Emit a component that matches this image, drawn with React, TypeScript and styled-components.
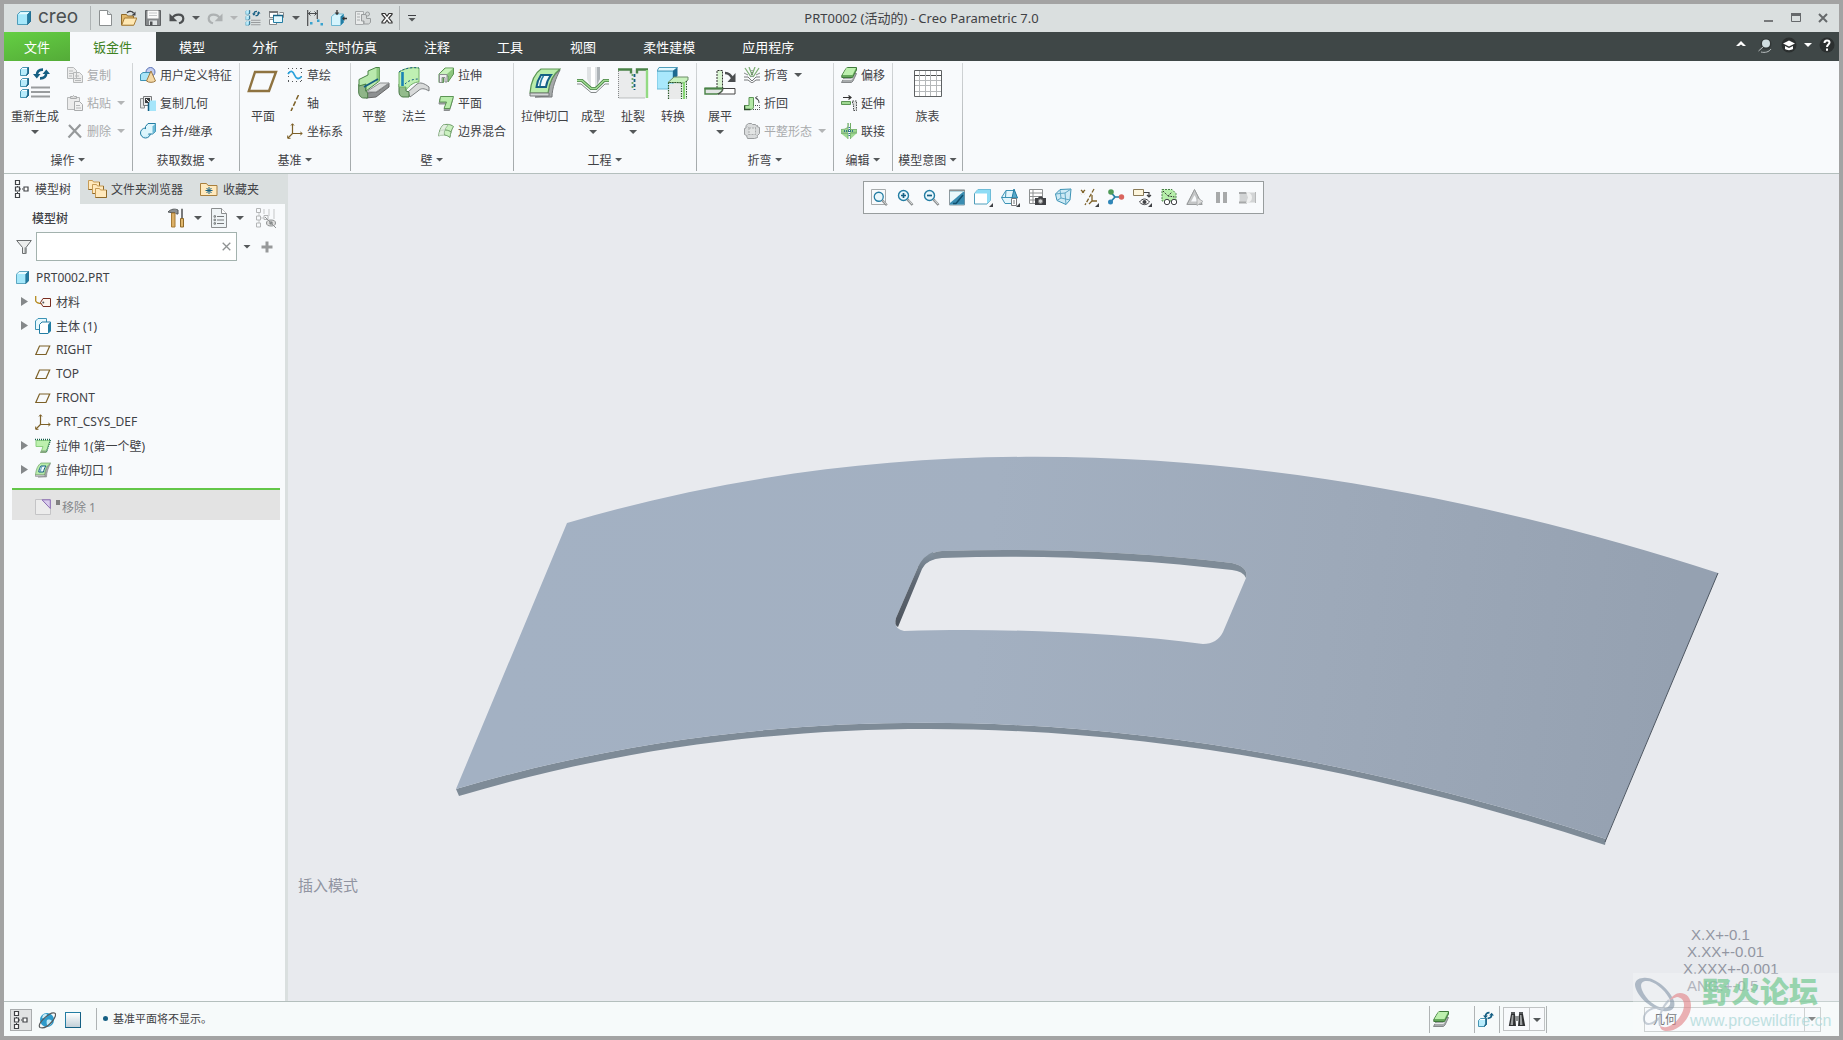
import React from 'react';
import styled, { createGlobalStyle, css } from 'styled-components';

const ink = '#3f4145';
const muted = '#a9abad';
const line = '#b4bfbd';
const panel = '#f8fafc';
const chrome = '#dadfdf';

const Global = createGlobalStyle`
  *, *::before, *::after { box-sizing: border-box; }
  body { margin: 0; }
  body, button, input, select {
    font-family: 'Noto Sans', 'Noto Sans CJK SC', sans-serif;
    font-size: 12px;
    color: ${ink};
  }
  button { border: 0; padding: 0; background: none; cursor: default; white-space: nowrap; }
  svg { display: block; flex: none; }
`;

const Frame = styled.div`
  position: relative;
  display: flex;
  flex-direction: column;
  min-height: 100vh;
  border: 4px solid #a3a3a3;
  background: ${panel};
`;

/* ---------- icons ---------- */

type IconProps = { size?: number; box?: number; children: React.ReactNode };
const Svg = ({ size = 16, box, children }: IconProps) => (
  <svg width={size} height={size} viewBox={`0 0 ${box ?? size} ${box ?? size}`} fill="none" aria-hidden="true">
    {children}
  </svg>
);

const MiniCube = ({ x, y, s = 9 }: { x: number; y: number; s?: number }) => (
  <g transform={`translate(${x} ${y}) scale(${s / 9})`}>
    <path d="M.5 2.500 2.500.5h6v6l-2 2h-6z" fill="#b8ecfc" stroke="#4795b3" />
    <path d="M1.500 2 2.700 1H8L7 2z" fill="#fff" />
    <path d="M8.500.5v6l-2 2v-1l1-1.500v-5z" fill="#155f83" stroke="#155f83" strokeWidth=".6" />
  </g>
);

const Cube = ({ size = 14 }: { size?: number }) => (
  <Svg size={size} box={14}>
    <path d="M.5 3.500 3.500.5h10v10l-3 3H.5z" fill="#a6e8fb" stroke="#4f9dba" />
    <path d="M3.700 1.200H12.600L10.300 3.300H1.500z" fill="#e8fbff" />
    <path d="M13.500.5v10l-3 3v-10z" fill="#237da3" stroke="#155f83" strokeWidth=".6" />
  </Svg>
);

const CycleArrows = ({ x, y, s = 1 }: { x: number; y: number; s?: number }) => (
  <g transform={`translate(${x} ${y}) scale(${s})`} stroke="#155f83" strokeWidth="2.600">
    <path d="M3.800 8.500C3.800 4.500 6 2.500 10 2.600" />
    <path d="M13.300 5.500C13.300 9.500 11 11.500 7 11.400" />
    <path d="M0 7h7.500L3.800 11.500z M9.500 7H17L13.300 2.500z" fill="#155f83" stroke="none" />
  </g>
);

const Regen = ({ size = 32 }: { size?: number }) => (
  <Svg size={size} box={32}>
    <MiniCube x={1} y={0} />
    <MiniCube x={1} y={11} />
    <MiniCube x={1} y={22} />
    <CycleArrows x={14} y={0} />
    <path d="M12 20.500h19M12 25h19M12 29.500h19" stroke="#999c9e" strokeWidth="2" />
  </Svg>
);

const NewFile = () => (
  <Svg>
    <path d="M2.500.5h8l4 4v11h-12z" fill="#fff" stroke="#8b8f90" />
    <path d="M10.500.5v4h4" fill="#dfe4e5" stroke="#8b8f90" />
  </Svg>
);
const OpenFolder = () => (
  <Svg>
    <path d="M.5 4.500h5l1 1.500h6v9H.5z" fill="#e2b96d" stroke="#8f6a2a" />
    <path d="M3.500 8h12.300l-3 7.200H.7z" fill="#ffe8b3" stroke="#a67b35" />
    <path d="M6 2.800C8 .8 11 .8 12.500 3" stroke="#3f4145" strokeWidth="1.400" />
    <path d="M14.500 1.500v4h-4z" fill="#3f4145" />
  </Svg>
);
const Save = () => (
  <Svg>
    <path d="M.5.5h15v15h-15z" fill="#85888a" stroke="#5e6163" />
    <path d="M2.500.5h11v8h-11z" fill="#fafafa" />
    <path d="M4 3h8M4 5.500h8" stroke="#c4c6c8" />
    <path d="M4 10.500h8V15H4z" fill="#dfe3e4" />
    <path d="M5 11.500h2.500V15H5z" fill="#4e5052" />
  </Svg>
);
const Undo = ({ flip = false, color = '#4c4f51' }: { flip?: boolean; color?: string }) => (
  <Svg>
    <g transform={flip ? 'translate(16 0) scale(-1 1)' : undefined}>
      <path d="M3 8.500C6 3.200 14 3.500 14.300 8.500c0 2.500-1.500 4-4.300 4.800" stroke={color} strokeWidth="2.200" />
      <path d="M.5 3.500v7.800h7.800z" fill={color} />
    </g>
  </Svg>
);
const Windows = () => (
  <Svg>
    <path d="M.5 1.500h8v6h-8zM.5 9.500h7v5h-7z" fill="#fff" stroke="#85898b" />
    <path d="M0 2h9" stroke="#77797b" strokeWidth="2" />
    <path d="M10.500 2.500h4v5h-2" fill="#fff" stroke="#85898b" />
    <path d="M4.500 5.500h9v7h-9z" fill="#e2f7fd" stroke="#237da3" />
    <path d="M4 5.500h10" stroke="#155f83" strokeWidth="1.500" />
  </Svg>
);
const Measure = () => (
  <Svg>
    <path d="M.7 0v16M10.300 0v9" stroke="#4a4d4f" strokeWidth="1.200" />
    <path d="M1 3.500h9M3.500 1.500 1.500 3.500l2 2M7.500 1.500l2 2-2 2" stroke="#4a4d4f" />
    <path d="M3 12h2.500v2.500H3zM10 9.500h2.500V12H10zM13.500 13H16v2.500h-2.500z" fill="#3aa3cf" />
  </Svg>
);
const CubeArrows = () => (
  <Svg>
    <path d="M.5 6.500 3.500 4h9v8.500l-3 3h-9z" fill="#d5f4fd" stroke="#6db7d2" />
    <path d="M12.500 4v8.500l-3 3V6.500z" fill="#237da3" />
    <path d="M6 0v4M16 8.500h-4" stroke="#333" strokeWidth="1.300" />
    <path d="M3.700 2.500h4.600L6 5.200zM13.500 6.200v4.600L11 8.500z" fill="#333" />
  </Svg>
);
const GreyPart = () => (
  <Svg>
    <path d="M.5 1.500h8v13h-8z" fill="#e9ebeb" stroke="#a7abac" />
    <path d="M2 4h3M2 7h3M2 10h3" stroke="#a7abac" />
    <path d="M6.500 4.500h5v4h4v4l-2 1.500H9v-3H6.500z" fill="#d5d8d8" stroke="#989c9d" />
    <circle cx="12.500" cy="4" r="2" fill="#d5d8d8" stroke="#989c9d" />
  </Svg>
);
const CloseWin = () => (
  <Svg>
    <path d="M3 3.500h3l2 2.800 2-2.800h3v1L9.800 8l3.200 4v1h-3L8 10.200 6 13H3v-1L6.200 8 3 4.500z" fill="#fff" stroke="#333" strokeWidth="1.200" />
  </Svg>
);

const Copy = () => (
  <Svg>
    <path d="M.5.5h6l3 3v8h-9zM6.500 5.500h6l3 3v7h-9z" fill="#ececec" stroke="#b6b8b9" />
    <path d="M2 4h4M2 6.500h4M2 9h3M8 9h4M8 11.500h6M8 13.500h6" stroke="#b6b8b9" />
  </Svg>
);
const Paste = () => (
  <Svg>
    <path d="M.5 2.500h12v12H.5z" fill="#ececec" stroke="#b6b8b9" />
    <path d="M3.500 3.500v-2h2L6.500.5l1 1h2v2z" fill="#ddd" stroke="#a9abac" />
    <path d="M7.500 6.500h5l3 3v6h-8z" fill="#f2f2f2" stroke="#a9abac" />
    <path d="M9 10.500h4M9 13h5" stroke="#b6b8b9" />
  </Svg>
);
const Delete = () => (
  <Svg><path d="m2 2 12 12.500M13.500 1.500 1.500 14.500" stroke="#96999b" strokeWidth="2.200" /></Svg>
);
const UserFeature = () => (
  <Svg>
    <circle cx="10.500" cy="5" r="4.500" fill="#c3cdf0" stroke="#5871b5" />
    <path d="M.5 7.500 3 5.500h7v6l-2 2H.5z" fill="#a9e4f8" stroke="#3d93b5" />
    <path d="m11 4 4.500 10c-2 1.800-7 1.800-9 0z" fill="#f5d9a6" stroke="#9d7a43" />
  </Svg>
);
const CopyGeom = () => (
  <Svg>
    <path d="M.5 3.500h4V13h-4z" fill="#e5e6e7" stroke="#8d9091" />
    <path d="M3.500 1.500h8v9h-8z" fill="#e9eaeb" stroke="#77797b" />
    <path d="M5 3h5v5H5z" fill="#3a3d40" />
    <path d="m6 4 3 3" stroke="#fff" />
    <path d="M10 5.500h6V16h-7V8z" fill="#a5e5fa" />
    <path d="M8.500 8v8" stroke="#155f83" strokeWidth="1.500" />
  </Svg>
);
const Merge = () => (
  <Svg>
    <circle cx="5.500" cy="10" r="5" fill="#c9eefa" stroke="#237da3" />
    <path d="M5.500 3.500 8 .5h7.500v8l-3 2.500h-7z" fill="#dff6fd" stroke="#237da3" />
    <path d="M15.500.5v8l-3 2.500V3.500z" fill="#6bb9d6" />
    <circle cx="5" cy="9.500" r="3.500" fill="#dcf5fc" />
  </Svg>
);
const PlaneBig = () => (
  <Svg size={32}><path d="M8 5h21l-7 19H1.800z" stroke="#8f7340" strokeWidth="2.400" /></Svg>
);
const Sketch = () => (
  <Svg>
    <path d="M1 1.500h14M1 14.500h14M1.500 1v14M14.500 1v14" stroke="#55585a" strokeDasharray="1 3" />
    <path d="M1 7C4 2.500 6 4.500 7.500 8s4 5 7 1.500" stroke="#2aa2dc" strokeWidth="1.800" />
  </Svg>
);
const Axis = () => (
  <Svg><path d="M11.500 0 4 16" stroke="#7d6128" strokeWidth="1.500" strokeDasharray="5 2" /></Svg>
);
const Csys = ({ color = '#7d6128' }: { color?: string }) => (
  <Svg>
    <path d="M5.500 1v9.500H15M5.500 10.500 1 15" stroke={color} strokeWidth="1.200" />
    <path d="M4 2.500 5.500.7 7 2.500M13.300 9l2 1.500-2 1.500M.7 12.500v2.800h2.800" stroke={color} />
  </Svg>
);

const FlatWall = () => (
  <Svg size={32}>
    <path d="M8 26v5l10-1 13-10v-4l-12 9z" fill="#8d9091" stroke="#666" />
    <path d="m8 25 14-9h9l-13 9z" fill="#dadcdc" stroke="#8d9091" />
    <path d="M.7 19v6c0 3 2 6 5 6h4V26l-2-2V17H1z" fill="#8fb588" stroke="#4a7a47" />
    <path d="M1 12.500 10 8V4l8-3.500h3.500V14L8 24V17l-7 2z" fill="#b9e9ad" stroke="#4a8347" />
    <path d="M18.500 1h3v13l-3 2z" fill="#8cc67e" />
    <path d="M6 20 20 12" stroke="#155f83" strokeWidth="1.800" />
  </Svg>
);
const Flange = () => (
  <Svg size={32}>
    <path d="m10 25 9-8c3-2 7-1 12 3v4c-5-3-8-3-11 0l-8 6z" fill="#d8dada" stroke="#7a7d7f" />
    <path d="M1 20v5c0 3 2 5 4 5h6v-5l-3-1v-7H1z" fill="#93bb8c" stroke="#4a7a47" />
    <path d="M1 5C7 1 14 0 21 1v14c-5 0-9 3-13 8v-3H1z" fill="#bff0b3" stroke="#6fae65" />
    <path d="M1 5C7 1 14 0 21 1M7 17c4-4 9-5 14-5" stroke="#155f83" strokeDasharray="2 2" />
    <path d="M4.500 5v14" stroke="#1c84b5" strokeWidth="2.600" />
  </Svg>
);
const Extrude = () => (
  <Svg>
    <path d="m1 7 6-6h8.500v6L10 15V9H5.500v6.500H1z" fill="#8cc67e" stroke="#5c9555" />
    <path d="m1.500 7 6-5.500h7.500L9 7z" fill="#c9f3bd" />
    <path d="M1.500 7.500H9V15H7v-4.500H4v5H1.500z" fill="#eef0f0" stroke="#8d9091" />
  </Svg>
);
const FlatPlane = () => (
  <Svg>
    <path d="M2 3.500h13l-3.500 12H6L8 9H1z" fill="#9da1a2" stroke="#8a8d8e" />
    <path d="M2.500 1.500h13L12 13.500H6L8.500 7h-7z" fill="#b9ecab" stroke="#5c9555" />
  </Svg>
);
const Boundary = () => (
  <Svg>
    <path d="M5 2c4-1 7-1 10.500 1.500-2 3-3 7-3.500 11C9 12 5 11 .7 13 1 8 2.500 5 5 2z" fill="#c9f0be" stroke="#6a9a64" />
    <path d="M10 2C7 5 6 8 6 12M2 8c4-2 8-1 11.500 1" stroke="#6a9a64" />
    <path d="M.7 13c1-5 2-8 4.300-11l5 0C7.500 5 6 8 6 12z" fill="#eceeee" opacity=".7" />
  </Svg>
);
const Cutout = ({ size = 32 }: { size?: number }) => (
  <Svg size={size} box={32}>
    <path d="M19 29c1-12 4-20 12-26-4 8-8 18-8 27H6z" fill="#a5a9a9" stroke="#77797b" />
    <path d="M1 26C2 14 6 6 12 2h19C23 8 20 17 19 26z" fill="#b9ecab" stroke="#5c9555" strokeWidth="1.200" />
    <path d="M1 26v3h19v-3z" fill="#d4d7d7" stroke="#77797b" />
    <path d="M7.500 20c.7-6 2.500-9 4.500-12h10c-3 4-4.500 8-5 12z" fill="#f3fafc" stroke="#155f83" strokeWidth="2" />
    <path d="M11 19c.5-4 1-7 3.500-10" stroke="#237da3" strokeWidth="1.600" />
  </Svg>
);
const Form = () => (
  <Svg size={32}>
    <path d="M10 0h13v12l-4 8h-5l-4-8z" fill="#dfe2e4" />
    <path d="M14 0h4v20h-4z" fill="#fff" />
    <path d="M20 0h3v12l-3 6z" fill="#adb3b7" />
    <path d="M0 13.500h5l9 8h5l8-8h5" stroke="#4a8347" strokeWidth="3.200" />
    <path d="M0 13.500h5l9 8h5l8-8h5" stroke="#a3dd95" strokeWidth="1.400" />
    <path d="M0 17h4l10 8.500h5L28 17h4" stroke="#85898a" />
  </Svg>
);
const Rip = () => (
  <Svg size={32}>
    <path d="M1 3h30v28H1z" fill="#eaebec" />
    <path d="M1.500 4v27h27" stroke="#85888a" strokeDasharray="1 1" />
    <path d="M1 2.500h13v4M31 2.500H20v4" stroke="#4a8347" strokeWidth="2.400" />
    <path d="M30 3v28" stroke="#93da83" strokeWidth="2.400" />
    <path d="M15.500 7v15" stroke="#6fa567" strokeWidth="1.800" strokeDasharray="2 2" />
    <path d="M17.500 7v16" stroke="#155f83" strokeWidth="1.800" strokeDasharray="3 2" />
  </Svg>
);
const Convert = () => (
  <Svg size={32}>
    <path d="M0 4h16v18H0z" fill="#a9e8fc" stroke="#6cbcd9" />
    <path d="M0 4 2 .5h18.500L16 4z" fill="#e1f8ff" stroke="#4f9dba" />
    <path d="m16 4 4.500-3.500V9L16 13z" fill="#1d6a90" />
    <path d="M11 15.500 17 10h14v3l-4 3z" fill="#c8f1bd" stroke="#6f8f6a" />
    <path d="M12 17h12v15H12z" fill="#e9eaea" />
    <path d="M11.500 32V15.500h13V32" stroke="#2f5a2d" strokeDasharray="1.500 1" strokeWidth="1.200" />
    <path d="M27 15v17" stroke="#86d674" strokeWidth="2.400" />
    <path d="M29.500 14v18" stroke="#2f5a2d" strokeDasharray="1.500 1" />
  </Svg>
);
const Unbend = () => (
  <Svg size={32}>
    <path d="M13 21V3.500h5.500V21" fill="#d9f5d2" stroke="#333" strokeDasharray="2 1" />
    <path d="M1 21.500h18c-1 4-3 5-6 5.500H1z" fill="#e3e5e5" stroke="#4a8347" strokeWidth="1.400" />
    <path d="M19 21.500h12V27H14c3-1 5-2.500 5-5.500z" fill="#fff" stroke="#444" />
    <path d="M.5 21.500H18" stroke="#4a8347" strokeWidth="2" />
    <path d="M21 6c4 0 6 2 7.500 6" stroke="#4a4d4f" strokeWidth="2.400" />
    <path d="M31.500 6v9h-8z" fill="#4a4d4f" />
  </Svg>
);
const Bend = () => (
  <Svg>
    <path d="M0 10h4l4 4 4-4h4M0 13h4l4 3 4-3h4" stroke="#77797b" />
    <path d="M1 1l6 9M15 1 9 10M5 0l3 8 3-8" stroke="#7fae77" strokeWidth="1.300" />
    <path d="M8 3v8" stroke="#55595b" strokeDasharray="1 1" />
    <path d="M0 6l4 2M16 6l-4 2" stroke="#85898a" />
  </Svg>
);
const BendBack = () => (
  <Svg>
    <path d="M.5 10.500H5v-8h4.500v9c0 2-1 3-3 3h-6z" fill="#b3e7a6" stroke="#5c9555" />
    <path d="M6.500 14.500H.5v-4" stroke="#2f4f2d" strokeWidth="1.500" />
    <path d="M11 10.500h4.500v4H8" stroke="#4a4d4f" strokeDasharray="1 1" />
    <path d="M15 8c0-3-1-4.500-3.500-5M13.500 1l-2 2 2.500 2" stroke="#4a4d4f" />
  </Svg>
);
const FlatPattern = () => (
  <Svg>
    <path d="M2 2.500 4.500.5h3l1 1h3l1.500 2 2.500 1v6l-2 2v2l-3 1h-7l-1-3-2-1v-6L2 5z" fill="#d9dbdc" stroke="#9a9d9f" />
    <path d="m2 2 12 12M14 2 2 14" stroke="#b1b4b5" strokeDasharray="2 1" />
    <path d="M5 5h6.500v6.500H5z" fill="#e2e4e4" stroke="#a9abac" strokeDasharray="2 1" />
  </Svg>
);
const Offset = () => (
  <Svg>
    <path d="M5.500 6.500h10l-3.500 7.500-1.500 1.500H.5z" fill="#a7abac" stroke="#85888a" />
    <path d="M1 12.500h9.500L14 5.500" fill="none" stroke="#e8eaea" />
    <path d="M5 1.500 6.500.5h9V3l-4 7.500H.8V8.500z" fill="#67a95d" stroke="#3f7a3b" />
    <path d="M5.500 1h9.500l-3.500 7H1.500z" fill="#bdf0ae" />
  </Svg>
);
const Extend = () => (
  <Svg>
    <path d="M2 2.500h7M7.500.5l2.500 2-2.500 2" stroke="#333" strokeWidth="1.200" />
    <path d="M.5 6.500h9v3h-9z" fill="#9fd992" stroke="#5c9555" />
    <path d="M11.500 6h4v9.500h-3V9h-1z" fill="#dcdede" stroke="#4a4d4f" strokeDasharray="1.500 1" />
  </Svg>
);
const Join = () => (
  <Svg>
    <path d="M7 0c1 4-1 6.500-7 6.500v2.800h7zM9.500 0v6.500H16v2.800H9.500zM9.500 16V10H16M7 16v-5.500H0" fill="#9fd992" stroke="#6cab62" strokeWidth=".8" />
    <path d="M8.200 4v9M3 8h10" stroke="#155f83" strokeDasharray="1 1" strokeWidth="1.300" />
  </Svg>
);
const FamilyTable = () => (
  <Svg size={32}>
    <path d="M2.500 3.500h27v26h-27z" fill="#fff" stroke="#5e6163" />
    <path d="M2.500 8.500h27" stroke="#4e5052" />
    <path d="M7.500 4v25M13.500 4v25M18.500 4v25M24.500 4v25M3 13.500h26M3 18.500h26M3 24.500h26" stroke="#b5b8ba" />
  </Svg>
);

const TreeIcon = ({ color = '#3f4145' }: { color?: string }) => (
  <Svg size={20}>
    <path d="M5.500 5v10M8 10h4" stroke={color} strokeDasharray="1 1" />
    <path d="M3.500 1.500h4v4h-4zM3.500 8h4v4h-4zM3.500 14.500h4v4h-4zM12 8h4v4h-4z" fill="#fff" stroke={color} strokeWidth="1.200" />
  </Svg>
);
const Folders = () => (
  <Svg size={20}>
    {[[0, 0], [4, 4], [7, 8]].map(([x, y]) => (
      <g key={x} transform={`translate(${x} ${y})`}>
        <path d="M.5 1.500h4l1 1.500h6v7.500H.5z" fill="#ffe9bd" stroke="#c79b55" />
        <path d="M.5 10.500h11V3" stroke="#8f6a2a" />
      </g>
    ))}
  </Svg>
);
const Favorite = () => (
  <Svg size={20}>
    <path d="M.5 4.500h6l1.500 2h9v10H.5z" fill="#ffe9bd" stroke="#a97f3c" />
    <path d="M9 8v7M5.500 11.500h7M6.500 9l5 5M11.500 9l-5 5" stroke="#155f83" />
  </Svg>
);
const Hammer = () => (
  <Svg size={20}>
    <path d="M1 4C4 .8 8 .5 11 2v4H9.500L8 4.500H4z" fill="#8d9091" stroke="#55595b" />
    <path d="M4.500 5h3.500v14H4.500z" fill="#dcb067" stroke="#a67b35" />
    <path d="M14.500 1h1v9h-1z" fill="#999" stroke="#77797b" />
    <path d="M13.500 10.500h3v8.500h-3z" fill="#e0b76e" stroke="#8f6a2a" />
  </Svg>
);
const ListDoc = () => (
  <Svg size={20}>
    <path d="M2.500.5h10l5 5v14h-15z" fill="#eff4f6" stroke="#8a8d8e" />
    <path d="M12.500.5v5h5" fill="#fff" stroke="#8a8d8e" />
    <path d="M8 8.500h7M8 12h7M8 15.500h7" stroke="#77797b" />
    <path d="M5 7.700h1.500v1.500H5zM5 11.200h1.500v1.500H5zM5 14.700h1.500v1.500H5z" stroke="#66696b" strokeWidth=".8" />
  </Svg>
);
const HideTree = () => (
  <Svg size={20}>
    <path d="M3 4v13M5 10h4M8 1v5M13 1v7M18 1v10" stroke="#c5c7c8" />
    <path d="M.5.5h4v4h-4zM.5 8h4v4h-4zM.5 15h4v4h-4zM8 7.500h4v4H8z" fill="#f8fafc" stroke="#b3b5b6" />
    <ellipse cx="15" cy="15" rx="4.500" ry="3" fill="#ddd" stroke="#8f9293" />
    <circle cx="15" cy="15" r="1.800" fill="#85898a" />
    <path d="m9 9 11 11" stroke="#8f9293" />
  </Svg>
);
const Funnel = () => (
  <Svg>
    <path d="M.7 1.500h14.600L10 8.500v6H6.500v-6z" fill="#eceded" stroke="#6a6d6f" />
    <path d="M8.500 8.500h2v6h-2z" fill="#8d9091" />
  </Svg>
);
const Tag = () => (
  <Svg>
    <path d="M.7 2v5c1 2 3 2.500 6 2.500" stroke="#b58a1f" strokeWidth="1.300" />
    <path d="M8 4.500h7.500v8H8L5.500 8.500z" fill="#fdf6ef" stroke="#7a2e22" />
    <circle cx="8.300" cy="8.500" r="1" fill="#55595b" />
  </Svg>
);
const Bodies = () => (
  <Svg>
    <path d="M.5 3 3 .5h8.500V9L9 11.500H.5z" fill="#e7f8fd" stroke="#3d93b5" />
    <path d="M4.500 6.500 7 4h8.500v9L13 15.500H4.500z" fill="#fff" stroke="#237da3" />
    <path d="M15.500 4v9L13 15.500v-9z" fill="#237da3" />
  </Svg>
);
const PlaneSmall = () => (
  <Svg><path d="M4.500 4h10.200L11 12.500H.8z" stroke="#7d6128" strokeWidth="1.200" /></Svg>
);
const ExtrudeWall = () => (
  <Svg>
    <path d="M1 2.500h14l-4 12H6L8 8.500H1z" fill="#bdf0ae" stroke="#8ccf80" />
    <path d="M0 1.500h16M15.500 2l-4 12" stroke="#155f4a" strokeDasharray="1 1" strokeWidth="1.300" />
    <path d="M6 12.500h5.500L11 15H5z" fill="#85a87f" />
  </Svg>
);
const Removed = () => (
  <Svg>
    <path d="M.5.5h15v15H.5z" fill="#ececec" stroke="#c4c4c6" />
    <path d="M7 .8h8.300v8.700z" fill="#d9ccec" stroke="#8a6bb3" />
  </Svg>
);

const Corner = () => <path d="M19 15v4h-4z" fill="#3f4145" />;
const Lens = ({ children }: { children?: React.ReactNode }) => (
  <>
    <circle cx="7.500" cy="7.500" r="5" fill="#eaf7fc" stroke="#237da3" strokeWidth="1.400" />
    <path d="m11.500 11.500 5 5.500" stroke="#8d9091" strokeWidth="2.600" />
    <path d="m12.500 12 3.500 4" stroke="#dcdede" />
    {children}
  </>
);
const viewIcons: { name: string; menu?: boolean; art: React.ReactNode }[] = [
  { name: '重新调整', art: <><path d="M1.500 1.500h14v15h-14z" stroke="#a7abac" /><g transform="translate(2 2) scale(.9)"><Lens /></g></> },
  { name: '放大', art: <Lens><path d="M5 7.500h5M7.500 5v5" stroke="#155f83" strokeWidth="1.700" /></Lens> },
  { name: '缩小', art: <Lens><path d="M5 7.500h5" stroke="#155f83" strokeWidth="1.700" /></Lens> },
  { name: '重画', art: <><path d="M1.500 2h15v15h-15z" fill="#b9e9f8" stroke="#8d9aa0" /><path d="M2 4h14.500v12.500H2z" fill="#3a8db2" /><path d="M2 4h13L2 15z" fill="#eaf8fc" /><path d="M1 2.500h16" stroke="#8d9091" strokeWidth="1.500" /><path d="M5 15.500h3l7-8.500" stroke="#12506f" strokeWidth="1.500" /></> },
  { name: '显示样式', menu: true, art: <><path d="M.5 5.500 4 1.500h12.500v10.500L13 16H.5z" fill="#fff" stroke="#4f9dba" /><path d="M.5 5.500 4 1.500h12.500L13 5.500zM13 5.500l3.500-4v10.500L13 16z" fill="#8edcf5" /><Corner /></> },
  { name: '已保存方向', menu: true, art: <><path d="M.5 9.500 5 2.500h8l3 7-3 6H4z" fill="#e4f6fc" stroke="#3d93b5" /><path d="M.5 9.500H16M5 2.500l-.5 7" stroke="#3d93b5" /><path d="m13 1 3.500 9H11z" fill="#5aa9c9" stroke="#237da3" /><path d="M10.500 10.500h5v7h-5z" fill="#fff" stroke="#77797b" /><path d="M12 13h2M12 15h2" stroke="#77797b" /><Corner /></> },
  { name: '视图管理器', art: <><path d="M1.500 1.500h13v14h-13z" fill="#fff" stroke="#8d9091" /><path d="M1.500 5h13M1.500 8.500h13M1.500 12h13M5 1.500v14" stroke="#8d9091" /><path d="M7 10h3l1-1.500h3l1 1.500h3v7H7z" fill="#3f4145" /><circle cx="12.500" cy="13.200" r="2.200" fill="#cfd2d3" stroke="#777" /></> },
  { name: '透视图', art: <><path d="M1.500 6 6 1.500l11-.5-1 11-4 4.500-9-4z" fill="#cdeaf5" stroke="#3d93b5" /><path d="M1.500 6 11 5l6-4M11 5l1 11.500M6 2l1 8 9 2M3 12.500 7 10" stroke="#5da6c4" /></> },
  { name: '基准显示过滤器', menu: true, art: <><path d="m1 2 4 4M5 2 1 6M14 1 5 17" stroke="#7d6128" strokeWidth="1.300" strokeDasharray="4 1.500" /><path d="M12 7v6h5M12 13l-3 3" stroke="#7d6128" strokeWidth="1.300" /><Corner /></> },
  { name: '旋转中心', art: <><path d="M4 4.500 8 9l-4.500 5M8 9h6" stroke="#237da3" strokeWidth="1.700" /><circle cx="4" cy="4" r="2.800" fill="#4f9a57" /><circle cx="3.500" cy="14" r="2.500" fill="#2f86b8" /><circle cx="14.500" cy="9" r="2.700" fill="#d9645d" /></> },
  { name: '注释显示', menu: true, art: <><path d="M.5 1.500h10v6H.5z" fill="#fdf6dd" stroke="#8a7b58" /><path d="M11 4.500h5v4M14 7l2 2 2-2" stroke="#3f4145" strokeWidth="1.200" /><path d="M6.500 14c3-4 7-4 10 0-3 3.500-7 3.500-10 0z" fill="#fff" stroke="#3f4145" /><circle cx="11.500" cy="14" r="2" fill="#3f4145" /><Corner /></> },
  { name: '钣金件显示', art: <><path d="M2 1.500h10l4 4V13H2z" fill="#b6efaa" stroke="#4a8347" strokeDasharray="2 1" /><path d="m3 3 5 5 4-4M8 8l7 1" stroke="#333" strokeDasharray="1.500 1" /><circle cx="7" cy="14" r="2.700" fill="#fff" stroke="#3f4145" /><circle cx="14" cy="14" r="2.700" fill="#fff" stroke="#3f4145" /></> },
  { name: '仿真', art: <><path d="M8.500 4 14.500 15H2.500z" stroke="#c4c6c7" strokeWidth="3" /><path d="M8.500 1.500 16 16.500H1z" stroke="#999c9d" /><path d="M11 9.500v8l6-4z" fill="#ddd" stroke="#b0b3b4" /></> },
  { name: '暂停', art: <path d="M4 4h4v11H4zM11 4h4v11h-4z" fill="#a7a9aa" /> },
  { name: '停止', art: <><path d="M1.500 4.500h16v10h-16z" fill="#d2d4d5" /><path d="M1 5h8M1 14.500h8" stroke="#a7a9aa" strokeWidth="2" /><path d="M8 4a6 5.500 0 0 1 0 11l2-5.500z" fill="#f0f1f1" /><path d="M17.500 4v11" stroke="#b6b8b9" /></> },
];

const Globe = () => (
  <Svg size={18}>
    <circle cx="9" cy="9" r="7" fill="#2f9bcb" />
    <path d="M5 4c2-2 5-1 4 1s-3 3-5 2zM9 9c3-1 5 0 5 2s-3 4-4 4-2-4-1-6z" fill="#c5ecf8" />
    <path d="M2 16.500C-2 13 12 .5 16.500 2S10 19 2 16.500z" stroke="#55595b" strokeWidth="1.200" />
  </Svg>
);
const Binoculars = () => (
  <Svg size={18}>
    <path d="M3 2h4v2H3zM11 2h4v2h-4z" fill="#55595b" />
    <path d="M3 4h4l1 12H.8zM11 4h4l2.200 12H10z" fill="#2f3133" />
    <path d="M7 6h4v5H7z" fill="#8d9091" />
    <path d="M4 5h1.500L5 15H2.500zM12 5h1.500L14.500 15H12z" fill="#9da0a1" />
  </Svg>
);

/* ---------- shared ---------- */

const Caret = styled.i<{ $muted?: boolean }>`
  flex: none;
  width: 8px;
  height: 4px;
  background: ${p => (p.$muted ? '#b3b5b6' : '#55585a')};
  clip-path: polygon(0 0, 100% 0, 50% 100%);
`;

/* ---------- title bar ---------- */

const TitleBar = styled.header`
  display: grid;
  grid-template-columns: 1fr auto 1fr;
  align-items: center;
  height: 28px;
  background: ${chrome};
`;
const TitleLeft = styled.div`display: flex; align-items: center; height: 100%;`;
const Brand = styled.div`
  display: flex;
  align-items: center;
  gap: 7px;
  width: 86px;
  padding-left: 13px;
  font: 400 19px/20px Inter, 'Noto Sans', sans-serif;
  color: #4b5052;
`;
const BrandName = styled.span`padding-bottom: 3px;`;
const Rule = styled.i<{ $h?: number }>`
  flex: none;
  width: 1px;
  height: ${p => p.$h ?? 24}px;
  background: #aeb3b4;
`;
const QuickTools = styled.div`display: flex; align-items: center; padding-left: 2px;`;
const QuickButton = styled.button`display: grid; place-items: center; width: 24px; height: 24px;`;
const CaretButton = styled.button<{ $w?: number }>`
  display: grid;
  place-items: center;
  flex: none;
  width: ${p => p.$w ?? 14}px;
  height: 24px;
`;
const CustomizeMark = styled.i`
  display: grid;
  justify-items: center;
  padding-top: 2px;
  width: 8px;
  border-top: 1px solid #3f4145;
`;
const Title = styled.h1`margin: 0; font-size: 13px; font-weight: 400; line-height: 20px;`;
const WindowButtons = styled.div`display: flex; justify-content: flex-end; padding-right: 3px;`;
const WindowButton = styled.button`display: grid; place-items: center; width: 27px; height: 24px;`;

/* ---------- tab bar ---------- */

const TabBar = styled.nav`display: flex; height: 29px; background: #3f4747;`;
const Tab = styled.button<{ $kind?: 'file' | 'active' }>`
  padding: 0 24px 0 23px;
  font-size: 13px;
  color: #fff;
  ${p => p.$kind === 'file' && css`
    padding: 0 20px;
    background: linear-gradient(165deg, #64cf43, #54ab38);
  `}
  ${p => p.$kind === 'active' && css`background: ${panel}; color: #3f8222;`}
`;
const TabTools = styled.div`
  display: flex;
  align-items: center;
  margin-left: auto;
  padding-bottom: 4px;
`;
const TabTool = styled.button<{ $narrow?: boolean }>`
  display: grid;
  place-items: center;
  width: ${p => (p.$narrow ? 14 : 24)}px;
  height: 20px;
`;

/* ---------- ribbon ---------- */

const Ribbon = styled.section`
  display: flex;
  height: 113px;
  border-bottom: 1px solid ${line};
  background: ${panel};
`;
const Group = styled.section`
  display: flex;
  flex-direction: column;
  padding-right: 1px;
  background: linear-gradient(#d3d6d8, #a3a8aa) right center / 1px 108px no-repeat;
`;
const GroupBody = styled.div`display: flex; justify-content: center; height: 84px; padding: 0 3px;`;
const GroupLabel = styled.button`
  display: flex;
  align-items: center;
  justify-content: center;
  gap: 3px;
  height: 28px;
  padding: 1px 5px 0;
`;
const BigButton = styled.button`
  display: flex;
  flex-direction: column;
  align-items: center;
  padding: 6px 4px 0;
`;
const BigLabel = styled.span`margin: 9px 0 4px; line-height: 18px; min-width: 32px;`;
const SmallColumn = styled.div`display: flex; flex-direction: column; align-items: flex-start;`;
const SmallButton = styled.button`
  display: flex;
  align-items: center;
  gap: 4px;
  height: 28px;
  padding: 0 4px;
  &:disabled { color: ${muted}; }
  ${Caret} { margin-left: 2px; }
`;

type Small = { text: string; icon: React.ReactNode; off?: boolean; menu?: boolean };
type Big = { text: string; icon: React.ReactNode; menu?: boolean };
const groups: { name: string; big: Big[]; small: Small[] }[] = [
  {
    name: '操作',
    big: [{ text: '重新生成', icon: <Regen />, menu: true }],
    small: [
      { text: '复制', icon: <Copy />, off: true },
      { text: '粘贴', icon: <Paste />, off: true, menu: true },
      { text: '删除', icon: <Delete />, off: true, menu: true },
    ],
  },
  {
    name: '获取数据',
    big: [],
    small: [
      { text: '用户定义特征', icon: <UserFeature /> },
      { text: '复制几何', icon: <CopyGeom /> },
      { text: '合并/继承', icon: <Merge /> },
    ],
  },
  {
    name: '基准',
    big: [{ text: '平面', icon: <PlaneBig /> }],
    small: [
      { text: '草绘', icon: <Sketch /> },
      { text: '轴', icon: <Axis /> },
      { text: '坐标系', icon: <Csys /> },
    ],
  },
  {
    name: '壁',
    big: [{ text: '平整', icon: <FlatWall /> }, { text: '法兰', icon: <Flange /> }],
    small: [
      { text: '拉伸', icon: <Extrude /> },
      { text: '平面', icon: <FlatPlane /> },
      { text: '边界混合', icon: <Boundary /> },
    ],
  },
  {
    name: '工程',
    big: [
      { text: '拉伸切口', icon: <Cutout /> },
      { text: '成型', icon: <Form />, menu: true },
      { text: '扯裂', icon: <Rip />, menu: true },
      { text: '转换', icon: <Convert /> },
    ],
    small: [],
  },
  {
    name: '折弯',
    big: [{ text: '展平', icon: <Unbend />, menu: true }],
    small: [
      { text: '折弯', icon: <Bend />, menu: true },
      { text: '折回', icon: <BendBack /> },
      { text: '平整形态', icon: <FlatPattern />, off: true, menu: true },
    ],
  },
  {
    name: '编辑',
    big: [],
    small: [
      { text: '偏移', icon: <Offset /> },
      { text: '延伸', icon: <Extend /> },
      { text: '联接', icon: <Join /> },
    ],
  },
  { name: '模型意图', big: [{ text: '族表', icon: <FamilyTable /> }], small: [] },
];

/* ---------- workspace ---------- */

const Workspace = styled.main`display: flex; flex: 1;`;
const SidePanel = styled.aside`
  flex: none;
  width: 284px;
  border-right: 3px solid ${chrome};
  background: ${panel};
`;
const PanelTabs = styled.div`
  display: flex;
  height: 30px;
  margin-right: -3px;
  background: ${chrome};
`;
const PanelTab = styled.button<{ $active?: boolean }>`
  display: flex;
  align-items: center;
  gap: 3px;
  padding: 0 9px 0 8px;
  ${p => p.$active && css`background: ${panel};`}
`;
const PanelHead = styled.div`
  display: flex;
  align-items: center;
  height: 28px;
  padding: 0 9px 0 28px;
  font-weight: 500;
`;
const HeadTools = styled.div`display: flex; align-items: center; margin-left: auto;`;
const HeadTool = styled.button`
  display: grid;
  place-items: center;
  flex: none;
  width: 20px;
  height: 24px;
  ${HeadTools} > &:last-child { margin-left: 5px; }
`;
const FilterRow = styled.div`
  display: flex;
  align-items: center;
  padding: 0 8px 0 12px;
  height: 29px;
`;
const FilterBox = styled.label`
  display: flex;
  align-items: center;
  flex: 1;
  min-width: 0;
  height: 29px;
  margin-left: 4px;
  padding-right: 5px;
  border: 1px solid #a3b2ae;
  background: #fff;
`;
const FilterInput = styled.input`
  flex: 1;
  min-width: 0;
  padding: 0 6px;
  border: 0;
  outline: 0;
  background: none;
`;
const Tree = styled.ul`margin: 0; padding: 5px 5px 0 8px; list-style: none;`;
const TreeRow = styled.li<{ $root?: boolean }>`
  display: flex;
  align-items: center;
  gap: ${p => (p.$root ? 7 : 5)}px;
  height: 24px;
  padding: 0 0 1px ${p => (p.$root ? 4 : 9)}px;
`;
const Twisty = styled.i<{ $open?: boolean }>`
  width: 7px;
  height: 9px;
  margin-right: 2px;
  background: ${p => (p.$open ? '#85888a' : 'transparent')};
  clip-path: polygon(0 0, 100% 50%, 0 100%);
`;
const InsertHere = styled.li`
  display: flex;
  align-items: center;
  height: 32px;
  margin-top: 6px;
  padding: 4px 0 0 23px;
  border-top: 2px solid #63c648;
  background: #e3e3e3;
  color: #85878a;
`;
const Suppressed = styled.i`
  align-self: flex-start;
  width: 4px;
  height: 5px;
  margin: 6px 2px 0 5px;
  background: #808080;
`;

const Viewer = styled.section`
  position: relative;
  flex: 1;
  display: flex;
  flex-direction: column;
  align-items: center;
  background: #e8eaee;
`;
const Scene = styled.svg`position: absolute; inset: 0; width: 100%; height: 100%;`;
const ViewToolbar = styled.div`
  position: relative;
  display: flex;
  margin-top: 7px;
  padding: 0 3px 0 2px;
  border: 1px solid #989d9e;
  background: ${panel};
`;
const ViewButton = styled.button<{ $menu?: boolean }>`
  display: grid;
  place-items: center start;
  width: ${p => (p.$menu ? 27 : 26)}px;
  height: 31px;
  padding-left: 4px;
`;
const InsertMode = styled.p`
  position: absolute;
  left: 10px;
  bottom: 106px;
  margin: 0;
  font-size: 15px;
  font-weight: 400;
  line-height: 20px;
  color: #9094a1;
`;
const Tolerances = styled.ul`
  position: absolute;
  right: 60px;
  bottom: 7px;
  width: 96px;
  margin: 0;
  padding: 0;
  list-style: none;
  font-family: 'Liberation Sans', sans-serif;
  font-size: 15px;
  line-height: 17px;
  color: #9296a2;
  white-space: nowrap;
`;
const Tolerance = styled.li<{ $indent: number }>`padding-left: ${p => p.$indent * 4}px;`;

/* ---------- status bar ---------- */

const StatusBar = styled.footer`
  display: flex;
  align-items: center;
  height: 35px;
  padding-right: 18px;
  border-top: 1px solid ${line};
  background: #f6fafa;
`;
const StatusToggle = styled.button<{ $on?: boolean }>`
  display: grid;
  place-items: center;
  width: 22px;
  height: 22px;
  margin: 2px 0 0 4px;
  border: 1px solid ${p => (p.$on ? '#a9acad' : 'transparent')};
  background: ${p => (p.$on ? '#e1e3e4' : 'none')};
`;
const StatusToggles = styled.div`display: flex; padding: 0 12px 0 2px;`;
const Swatch = styled.i`
  width: 16px;
  height: 16px;
  border: 1px solid #237da3;
  border-right-color: #155f83;
  border-bottom-color: #155f83;
  background: linear-gradient(#fff, #c3d0d8);
`;
const Message = styled.p`
  display: flex;
  align-items: center;
  gap: 5px;
  margin: 0 auto 2px 6px;
  font-size: 11px;
  &::before { content: ''; width: 5px; height: 5px; border-radius: 50%; background: #155f83; }
`;
const StatusCell = styled.div<{ $w: number }>`
  display: flex;
  align-items: center;
  justify-content: flex-start;
  width: ${p => p.$w}px;
  height: 27px;
  padding-left: 3px;
  border-left: 1px solid #b0b4b5;
`;
const FindBox = styled.div`
  display: flex;
  height: 24px;
  border: 1px solid #c0c3c4;
  background: ${panel};
`;
const FindButton = styled.button`
  display: grid;
  place-items: center;
  width: 26px;
  border-right: 1px solid #c0c3c4;
`;
const SelectWrap = styled.label`
  display: grid;
  grid-template-columns: 1fr 16px;
  align-items: center;
  justify-items: center;
  width: 177px;
  height: 25px;
  margin-left: 97px;
  border: 1px solid #bcc0c1;
  background: ${panel};
`;
const Select = styled.select`
  grid-area: 1 / 1 / 2 / 3;
  width: 100%;
  height: 23px;
  padding: 0 8px;
  border: 0;
  background: linear-gradient(#bcc0c1, #bcc0c1) right 15px top / 1px 100% no-repeat;
  appearance: none;
`;
const SelectCaret = styled(Caret)`grid-area: 1 / 2 / 2 / 3;`;

const Watermark = styled.div`
  position: absolute;
  right: 0;
  bottom: 0;
  display: flex;
  width: 206px;
  height: 63px;
  background: rgba(250, 253, 253, 0.3);
  pointer-events: none;
  white-space: nowrap;
`;
const MarkText = styled.div`display: flex; flex-direction: column; margin-left: -3px; opacity: 0.75;`;
const MarkName = styled.b`
  padding-left: 12px;
  font: 900 29px/34px 'Noto Sans CJK SC', sans-serif;
  color: #7bcb98;
`;
const MarkUrl = styled.span`
  font: 16px/28px 'Liberation Sans', sans-serif;
  color: #acd8d8;
`;

const tabs = ['模型', '分析', '实时仿真', '注释', '工具', '视图', '柔性建模', '应用程序'];
const treeRows: { text: string; icon: React.ReactNode; open?: boolean }[] = [
  { text: '材料', icon: <Tag />, open: true },
  { text: '主体 (1)', icon: <Bodies />, open: true },
  { text: 'RIGHT', icon: <PlaneSmall /> },
  { text: 'TOP', icon: <PlaneSmall /> },
  { text: 'FRONT', icon: <PlaneSmall /> },
  { text: 'PRT_CSYS_DEF', icon: <Csys /> },
  { text: '拉伸 1(第一个壁)', icon: <ExtrudeWall />, open: true },
  { text: '拉伸切口 1', icon: <Cutout size={16} />, open: true },
];

const SheetPart = () => (
  <Scene viewBox="288 174 1551 827" preserveAspectRatio="xMidYMid meet" role="img" aria-label="PRT0002">
    <defs>
      <linearGradient id="face" gradientUnits="userSpaceOnUse" x1="510" y1="640" x2="1660" y2="780">
        <stop offset="0" stopColor="#a3b1c3" />
        <stop offset=".4" stopColor="#a3b0c1" />
        <stop offset=".7" stopColor="#9da9b9" />
        <stop offset="1" stopColor="#95a1b1" />
      </linearGradient>
      <linearGradient id="wall" x1="0" y1="0" x2="0" y2="1">
        <stop offset="0" stopColor="#8493a0" />
        <stop offset=".4" stopColor="#5f6873" />
        <stop offset="1" stopColor="#4d545d" />
      </linearGradient>
    </defs>
    <path d="M456 789C836 677 1227 716 1606 839L1605 845C1230 722 839 683 459 796Z" fill="#7e8b97" />
    <path
      fillRule="evenodd"
      fill="url(#face)"
      d="M567 523C947 411 1338 450 1718 573L1606 839C1227 716 836 677 456 789Z
         M942 551C1040 548 1140 552 1232 563Q1249 567 1246 578L1223 632Q1217 644 1203 644C1110 632 1000 628 904 631Q893 629 896 618L918 567Q926 552 942 551Z"
    />
    <path d="M942 551C1040 548 1140 552 1232 563Q1249 567 1246 578Q1243 571 1232 570C1140 559 1040 554 942 558Q928 559 922 568L918 567Q926 552 942 551Z" fill="#7e8b97" />
    <path d="M918 567Q923 556 933 552L934 559Q926 561 922 569L898 627Q894 625 896 618Z" fill="url(#wall)" />
    <path d="M1718 573 1605 842" stroke="#4c5560" />
  </Scene>
);

export default function App() {
  return (
    <Frame>
      <Global />
      <TitleBar>
        <TitleLeft>
          <Brand><Cube /><BrandName>creo</BrandName></Brand>
          <Rule />
          <QuickTools>
            <QuickButton aria-label="新建"><NewFile /></QuickButton>
            <QuickButton aria-label="打开"><OpenFolder /></QuickButton>
            <QuickButton aria-label="保存"><Save /></QuickButton>
            <QuickButton aria-label="撤消"><Undo /></QuickButton>
            <CaretButton aria-label="撤消列表"><Caret /></CaretButton>
            <QuickButton aria-label="重做"><Undo flip color="#adb1b2" /></QuickButton>
            <CaretButton aria-label="重做列表"><Caret $muted /></CaretButton>
            <QuickButton aria-label="重新生成"><Regen size={16} /></QuickButton>
            <QuickButton aria-label="窗口"><Windows /></QuickButton>
            <CaretButton aria-label="窗口列表"><Caret /></CaretButton>
            <QuickButton aria-label="测量"><Measure /></QuickButton>
            <QuickButton aria-label="质量属性"><CubeArrows /></QuickButton>
            <QuickButton aria-label="零件"><GreyPart /></QuickButton>
            <QuickButton aria-label="关闭窗口"><CloseWin /></QuickButton>
          </QuickTools>
          <Rule />
          <CaretButton $w={24} aria-label="自定义快速访问工具栏">
            <CustomizeMark><Caret /></CustomizeMark>
          </CaretButton>
        </TitleLeft>
        <Title>PRT0002 (活动的) - Creo Parametric 7.0</Title>
        <WindowButtons>
          <WindowButton aria-label="最小化"><Svg size={10}><path d="M0 8h9" stroke="#77797b" strokeWidth="2" /></Svg></WindowButton>
          <WindowButton aria-label="最大化"><Svg size={10}><path d="M.5.5h9v8h-9z" stroke="#66696b" /><path d="M0 1.500h10" stroke="#66696b" strokeWidth="3" /></Svg></WindowButton>
          <WindowButton aria-label="关闭"><Svg size={10}><path d="m1 1 8 8M9 1 1 9" stroke="#66696b" strokeWidth="2" /></Svg></WindowButton>
        </WindowButtons>
      </TitleBar>

      <TabBar>
        <Tab $kind="file">文件</Tab>
        <Tab $kind="active">钣金件</Tab>
        {tabs.map(t => <Tab key={t}>{t}</Tab>)}
        <TabTools>
          <TabTool aria-label="折叠功能区"><Svg size={12}><path d="m1 7 5-5 5 5H8L6 5.500 4 7z" fill="#fff" /></Svg></TabTool>
          <TabTool aria-label="搜索"><Svg><circle cx="9" cy="7" r="5.500" fill="#313636" /><circle cx="9" cy="6.500" r="4" fill="#cfdcdf" /><path d="m6 10-4.500 4M4 15c4 1 8 0 10-3" stroke="#b9bfc0" /></Svg></TabTool>
          <TabTool aria-label="学习连接"><Svg><circle cx="8" cy="8" r="7.500" fill="#2b2f2f" /><path d="m2 6.500 6-3 6 3-6 3zM4 9v3c2 1.500 6 1.500 8 0V9l-4 2z" fill="#fff" /></Svg></TabTool>
          <TabTool $narrow aria-label="学习连接菜单"><Svg size={8}><path d="M0 2h8L4 6z" fill="#fff" /></Svg></TabTool>
          <TabTool aria-label="帮助"><Svg><circle cx="8" cy="8" r="7.500" fill="#2b2f2f" /><path d="M5.500 6C5.500 2.500 10.500 3 10.500 5.500 10.500 7.500 8 7.500 8 10M8 11.500v2.200" stroke="#fff" strokeWidth="2" /></Svg></TabTool>
        </TabTools>
      </TabBar>

      <Ribbon>
        {groups.map(g => (
          <Group key={g.name}>
            <GroupBody>
              {g.big.map(b => (
                <BigButton key={b.text}>
                  {b.icon}
                  <BigLabel>{b.text}</BigLabel>
                  {b.menu && <Caret />}
                </BigButton>
              ))}
              {g.small.length > 0 && (
                <SmallColumn>
                  {g.small.map(s => (
                    <SmallButton key={s.text} disabled={s.off}>
                      {s.icon}
                      {s.text}
                      {s.menu && <Caret $muted={s.off} />}
                    </SmallButton>
                  ))}
                </SmallColumn>
              )}
            </GroupBody>
            <GroupLabel>{g.name}<Caret /></GroupLabel>
          </Group>
        ))}
      </Ribbon>

      <Workspace>
        <SidePanel>
          <PanelTabs>
            <PanelTab $active><TreeIcon />模型树</PanelTab>
            <PanelTab><Folders />文件夹浏览器</PanelTab>
            <PanelTab><Favorite />收藏夹</PanelTab>
          </PanelTabs>
          <PanelHead>
            模型树
            <HeadTools>
              <HeadTool aria-label="设置"><Hammer /></HeadTool>
              <CaretButton $w={22} aria-label="设置菜单"><Caret /></CaretButton>
              <HeadTool aria-label="显示"><ListDoc /></HeadTool>
              <CaretButton $w={22} aria-label="显示菜单"><Caret /></CaretButton>
              <HeadTool aria-label="隐藏树"><HideTree /></HeadTool>
            </HeadTools>
          </PanelHead>
          <FilterRow>
            <Funnel />
            <FilterBox>
              <FilterInput type="text" aria-label="过滤模型树" />
              <Svg size={9}><path d="m.7.700 7.600 7.600M8.300.7.700 8.300" stroke="#8f9293" strokeWidth="1.300" /></Svg>
            </FilterBox>
            <CaretButton $w={20} aria-label="过滤历史"><Caret /></CaretButton>
            <HeadTool aria-label="添加"><Svg size={12}><path d="M6 .5v11M.5 6h11" stroke="#97999a" strokeWidth="3" /></Svg></HeadTool>
          </FilterRow>
          <Tree>
            <TreeRow $root><Cube size={13} />PRT0002.PRT</TreeRow>
            {treeRows.map(r => (
              <TreeRow key={r.text}><Twisty $open={r.open} />{r.icon}{r.text}</TreeRow>
            ))}
            <InsertHere><Removed /><Suppressed />移除 1</InsertHere>
          </Tree>
        </SidePanel>

        <Viewer>
          <SheetPart />
          <ViewToolbar>
            {viewIcons.map(v => (
              <ViewButton key={v.name} $menu={v.menu} aria-label={v.name}>
                <Svg size={19}>{v.art}</Svg>
              </ViewButton>
            ))}
          </ViewToolbar>
          <InsertMode>插入模式</InsertMode>
          <Tolerances>
            <Tolerance $indent={2}>X.X+-0.1</Tolerance>
            <Tolerance $indent={1}>X.XX+-0.01</Tolerance>
            <Tolerance $indent={0}>X.XXX+-0.001</Tolerance>
            <Tolerance $indent={1}>ANG.+-0.5</Tolerance>
          </Tolerances>
        </Viewer>
      </Workspace>

      <StatusBar>
        <StatusToggles>
          <StatusToggle $on aria-label="模型树"><TreeIcon /></StatusToggle>
          <StatusToggle aria-label="浏览器"><Globe /></StatusToggle>
          <StatusToggle aria-label="全屏"><Swatch /></StatusToggle>
        </StatusToggles>
        <Rule $h={22} />
        <Message>基准平面将不显示。</Message>
        <StatusCell $w={45}><Offset /></StatusCell>
        <StatusCell $w={25}>
          <Svg><MiniCube x={0} y={7} s={9} /><CycleArrows x={5} y={0} s={0.65} /></Svg>
        </StatusCell>
        <StatusCell $w={47}>
          <FindBox>
            <FindButton aria-label="查找"><Binoculars /></FindButton>
            <CaretButton aria-label="查找选项"><Caret /></CaretButton>
          </FindBox>
        </StatusCell>
        <Rule $h={27} />
        <SelectWrap>
          <Select aria-label="选择过滤器" defaultValue="几何"><option>几何</option></Select>
          <SelectCaret />
        </SelectWrap>
      </StatusBar>

      <Watermark>
        <svg width="60" height="63" viewBox="0 0 60 63" fill="none" aria-hidden="true" opacity=".6">
          <path fillRule="evenodd" fill="#8395a8" d="M10 5C20 3 36 15 41 28 43 36 38 39 30 38 16 35 3 22 2 12 2 8 5 5 10 5ZM14 8C8 8 7 12 9 17 13 27 24 36 33 35 38 33 38 29 36 25 31 16 21 8 14 8Z" />
          <path fillRule="evenodd" fill="#e27f84" d="M47 20C56 20 60 29 57 39 53 50 44 58 34 58 30 58 27 56 27 53 35 57 44 50 49 40 53 31 51 25 44 24 40 25 37 27 36 28 39 23 43 20 47 20Z" />
          <path d="M30 36C20 32 10 39 11 47 12 53 20 52 26 45M36 27C29 34 25 44 27 53" stroke="#a5b1bf" strokeWidth="2" />
        </svg>
        <MarkText>
          <MarkName>野火论坛</MarkName>
          <MarkUrl>www.proewildfire.cn</MarkUrl>
        </MarkText>
      </Watermark>
    </Frame>
  );
}
